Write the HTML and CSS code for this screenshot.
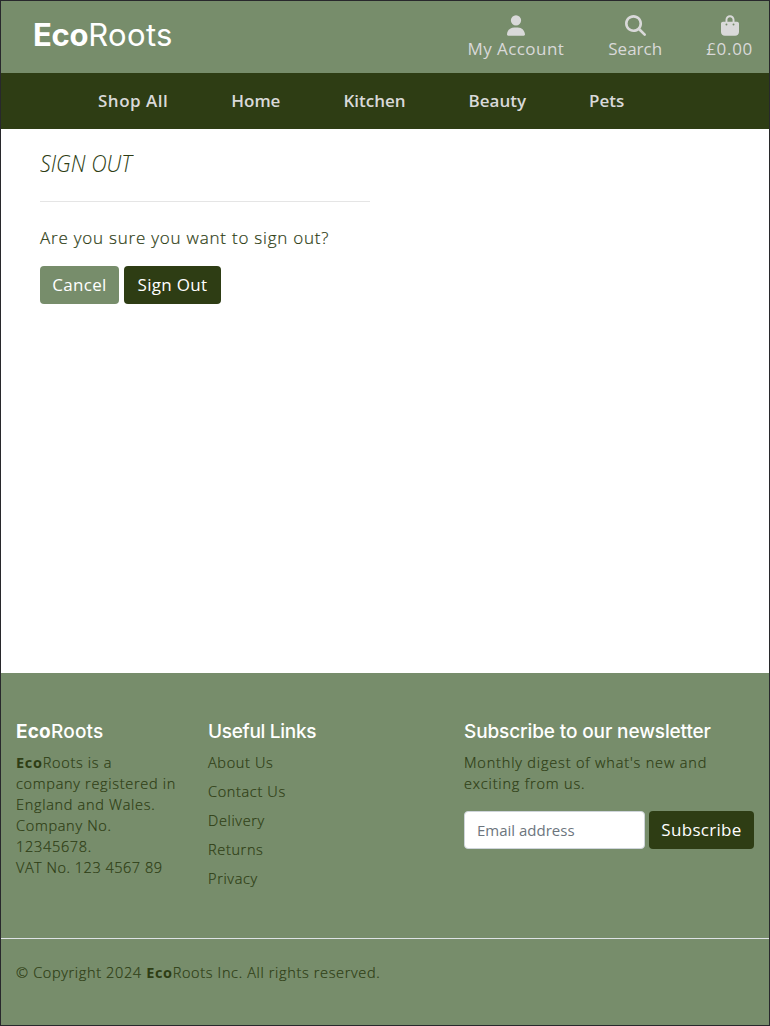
FILE: index.html
```html
<!DOCTYPE html>
<html lang="en">
<head>
<meta charset="utf-8">
<title>EcoRoots - Sign Out</title>
<link rel="stylesheet" href="styles.css">
</head>
<body>
<div class="page">
  <header class="topbar">
    <a class="logo"><strong>Eco</strong>Roots</a>
    <ul class="tools">
      <li class="tool account">
        <svg width="18" height="21" viewBox="0 0 448 512"><path d="M224 256A128 128 0 1 0 224 0a128 128 0 1 0 0 256zm-45.700 48C79.800 304 0 383.800 0 482.300C0 498.700 13.300 512 29.700 512H418.300c16.400 0 29.700-13.300 29.700-29.700C448 383.800 368.200 304 269.700 304H178.300z"/></svg>
        <span>My Account</span>
      </li>
      <li class="tool search">
        <svg width="21" height="21" viewBox="0 0 512 512"><path d="M416 208c0 45.900-14.900 88.300-40 122.700L502.600 457.400c12.500 12.500 12.500 32.800 0 45.300s-32.800 12.500-45.300 0L330.700 376c-34.400 25.200-76.800 40-122.700 40C93.100 416 0 322.900 0 208S93.100 0 208 0S416 93.100 416 208zM208 352a144 144 0 1 0 0-288 144 144 0 1 0 0 288z"/></svg>
        <span>Search</span>
      </li>
      <li class="tool bag">
        <svg width="18" height="21" viewBox="0 0 448 512"><path d="M160 112c0-35.300 28.700-64 64-64s64 28.700 64 64v48H160V112zm-48 48H48c-26.500 0-48 21.500-48 48V416c0 53 43 96 96 96H352c53 0 96-43 96-96V208c0-26.500-21.500-48-48-48H336V112C336 50.100 285.900 0 224 0S112 50.100 112 112v48zm24 48a24 24 0 1 1 0 48 24 24 0 1 1 0-48zm152 24a24 24 0 1 1 48 0 24 24 0 1 1-48 0z"/></svg>
        <span>£0.00</span>
      </li>
    </ul>
  </header>
  <nav class="nav">
    <a class="nav-all">Shop All</a>
    <a class="nav-home">Home</a>
    <a class="nav-kitchen">Kitchen</a>
    <a class="nav-beauty">Beauty</a>
    <a class="nav-pets">Pets</a>
  </nav>
  <main class="content">
    <h1 class="title">SIGN OUT</h1>
    <hr class="rule">
    <p class="question">Are you sure you want to sign out?</p>
    <div class="actions">
      <a class="btn btn-light cancel">Cancel</a>
      <button class="btn signout" type="button">Sign Out</button>
    </div>
  </main>
  <footer class="footer">
    <div class="columns">
      <section class="about">
        <h2 class="heading brand"><strong>Eco</strong>Roots</h2>
        <p class="text"><strong>Eco</strong>Roots is a<br>company registered in<br>England and Wales.<br>Company No.<br>12345678.<br><span class="vat">VAT No. 123 4567 89</span></p>
      </section>
      <section class="links">
        <h2 class="heading useful">Useful Links</h2>
        <ul class="link-list">
          <li>About Us</li>
          <li>Contact Us</li>
          <li>Delivery</li>
          <li>Returns</li>
          <li>Privacy</li>
        </ul>
      </section>
      <section class="newsletter">
        <h2 class="heading news">Subscribe to our newsletter</h2>
        <p class="text digest">Monthly digest of what's new and<br>exciting from us.</p>
        <form class="subscribe">
          <input class="email" type="email" placeholder="Email address">
          <button class="btn subscribe-btn" type="button">Subscribe</button>
        </form>
      </section>
    </div>
    <p class="copyright">© Copyright 2024 <strong>Eco</strong>Roots Inc. All rights reserved.</p>
  </footer>
</div>
</body>
</html>
```
FILE: styles.css
```css
* { box-sizing: border-box; }
body {
  margin: 0;
  font-family: "Open Sans", "Noto Sans", sans-serif;
  font-weight: 300;
  color: #2e3d14;
}
h1, h2, p, ul { margin: 0; padding: 0; }
ul { list-style: none; }
strong { font-weight: 700; }
.page {
  display: flex;
  flex-direction: column;
  width: 770px;
  height: 1026px;
  border: 1px solid #28282c;
  background: #fff;
}
.topbar {
  display: flex;
  justify-content: space-between;
  height: 72px;
  padding: 0 16px 0 32px;
  background: #778d6b;
}
.logo {
  padding-top: 13px;
  font: 400 31px/42px Inter, "Liberation Sans", sans-serif;
  letter-spacing: 0.35px;
  color: #fff;
}
.logo strong { letter-spacing: -0.3px; }
.tools { display: flex; gap: 44px; padding-top: 14px; }
.tool {
  display: flex;
  flex-direction: column;
  align-items: center;
  font-size: 17px;
  font-weight: 400;
  line-height: 26px;
  white-space: nowrap;
  color: #d9d9d9;
}
.account { letter-spacing: 0.45px; }
.bag { letter-spacing: 0.7px; }
.tool svg { display: block; fill: #d9d9d9; }
.nav {
  display: flex;
  gap: 63px;
  height: 56px;
  padding-left: 97px;
  background: #2e3d14;
  color: #d9d9d9;
  font-size: 17px;
  font-weight: 600;
  line-height: 56px;
  white-space: nowrap;
}
.nav-all { letter-spacing: 0.5px; }
.content { height: 544px; padding: 18px 39px 0; }
.title {
  font-size: 24px;
  font-style: italic;
  font-weight: 300;
  line-height: 32px;
  transform: scaleX(0.895);
  transform-origin: left;
}
.rule { width: 330px; height: 1px; margin: 22px 0 23px; border: 0; background: #e5e5e5; }
.question { font-size: 17px; line-height: 26px; letter-spacing: 0.78px; white-space: nowrap; }
.question, .text, .link-list, .copyright { -webkit-text-stroke: 0.2px #2e3d14; }
.text strong, .copyright strong { -webkit-text-stroke: 0; }
.actions { display: flex; gap: 5px; margin-top: 15px; }
.btn {
  height: 38px;
  padding: 0;
  border: 0;
  border-radius: 4px;
  background: #2e3d14;
  color: #fff;
  font: 400 17px/38px "Open Sans", "Noto Sans", sans-serif;
  letter-spacing: 0.3px;
  text-align: center;
  white-space: nowrap;
}
.btn-light { background: #778d6b; }
.cancel { width: 79px; }
.signout { width: 97px; }
.footer { height: 352px; background: #778d6b; }
.columns {
  display: grid;
  grid-template-columns: 192px 256px 1fr;
  height: 266px;
  padding: 47px 15px 0;
  border-bottom: 1px solid #dee2e6;
}
.heading {
  margin-bottom: 8px;
  font: 500 19px/24px Inter, "Liberation Sans", sans-serif;
  color: #fff;
  white-space: nowrap;
}
.brand { letter-spacing: 0.2px; }
.useful { letter-spacing: -0.3px; }
.news { letter-spacing: -0.12px; }
.text, .link-list, .copyright {
  font-size: 14.500px;
  line-height: 21px;
  letter-spacing: 0.65px;
  white-space: nowrap;
}
.text { letter-spacing: 0.7px; }
.vat { letter-spacing: 0.52px; }
.digest { letter-spacing: 0.83px; }
.link-list { display: grid; gap: 8px; }
.subscribe { display: flex; gap: 4px; margin-top: 17px; }
.email {
  width: 181px;
  height: 38px;
  padding: 0 12px;
  border: 1px solid #ced4da;
  border-radius: 4px;
  background: #fff;
  font: 400 15px "Open Sans", "Noto Sans", sans-serif;
}
.email::placeholder { color: #6c757d; opacity: 1; }
.subscribe-btn { width: 105px; }
.copyright { padding: 23px 15px 0; }
```
